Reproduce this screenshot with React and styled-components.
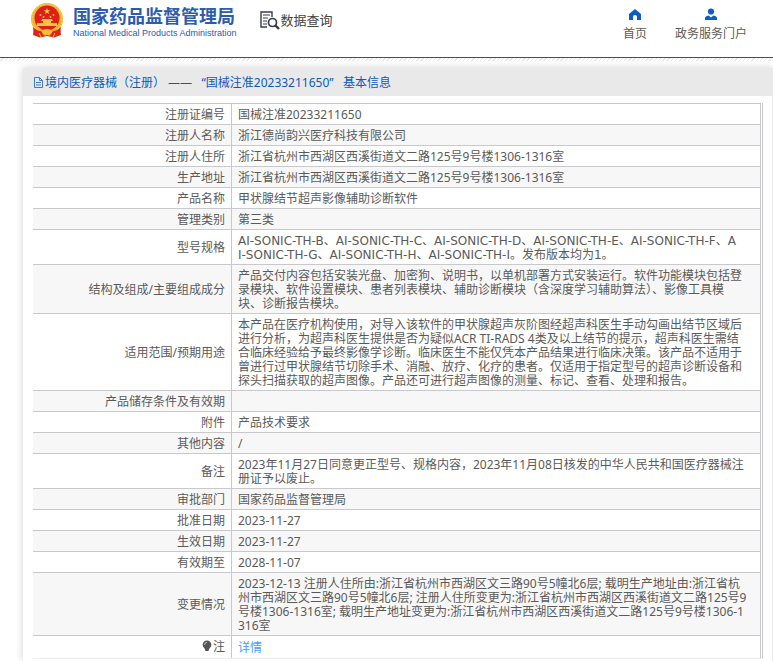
import React from 'react'
import styled, { createGlobalStyle } from 'styled-components'

const GlobalStyle = createGlobalStyle`
  * {
    box-sizing: border-box;
  }
  body {
    margin: 0;
    background: #fff;
    color: #5a5a5a;
    font: 12px/14px 'Noto Sans', 'Noto Sans CJK SC', sans-serif;
  }
  a {
    text-decoration: none;
  }
`

const Page = styled.div`
  display: flex;
  flex-direction: column;
  min-height: 100vh;
  overflow: hidden;
`

const Header = styled.header`
  display: flex;
  align-items: flex-start;
  height: 58px;
  padding: 0 26px 0 30px;
  border-bottom: 1px solid #0d5cab;
`

const Brand = styled.a`
  display: flex;
  gap: 9px;
  padding-top: 2px;
  color: #2b5cad;
`

const BrandText = styled.div`
  display: flex;
  flex-direction: column;
  padding-top: 4px;
  white-space: nowrap;
`

const BrandName = styled.strong`
  font-size: 18px;
  line-height: 20px;
  font-weight: 700;
`

const BrandSub = styled.span`
  font: 9px/14px 'Liberation Sans', sans-serif;
`

const Section = styled.div`
  display: flex;
  align-items: center;
  gap: 1px;
  margin: 8px auto 0 23px;
  color: #444;
  font-size: 13px;
  line-height: 24px;
  white-space: nowrap;
`

const Nav = styled.nav`
  display: flex;
  gap: 28px;
  padding-top: 8px;
`

const NavLink = styled.a`
  display: flex;
  flex-direction: column;
  align-items: center;
  gap: 6px;
  color: #5a5a5a;
  white-space: nowrap;

  svg {
    fill: #0a5fc2;
  }
`

const Dots = styled.div`
  height: 3px;
  background: repeating-linear-gradient(135deg, #fff 0 2px, #e9e9e9 2px 3px);
`

const Panel = styled.main`
  flex: 1;
  margin: 7px 0 0 23px;
  border: 1px solid #e9e9e9;
  border-width: 0 1px 0 0;
  box-shadow: 0 0 8px rgba(0, 0, 0, 0.18);
`

const PanelTitle = styled.h1`
  display: flex;
  align-items: center;
  height: 28px;
  margin: 0;
  padding: 2px 10px 0;
  background: #e9e9e9;
  color: #0a5bbf;
  font-size: 12px;
  font-weight: 400;
  white-space: pre;
`

const PanelBody = styled.div`
  padding: 7px 9px 2px 10px;
`

const Table = styled.table`
  width: 100%;
  border-right: 1px solid #c9c9cd;
  border-bottom: 1px solid #ebebf5;
  border-spacing: 0;
  padding-right: 1px;
`

const Row = styled.tr`
  background: ${props => (props.$shaded ? '#f7f7f7' : '#fff')};
`

const Label = styled.th`
  width: 199px;
  padding: 4px 6px ${props => (props.$tall ? '4px' : '2px')};
  border-top: 1px solid #c9c9cd;
  border-right: 1px solid #c9c9cd;
  font-weight: 400;
  text-align: right;
  vertical-align: middle;

  svg {
    margin-right: 1px;
    vertical-align: -1px;
  }
`

const Value = styled.td`
  height: 21px;
  padding: 4px 6px 2px;
  border-top: 1px solid #c9c9cd;
  border-right: 1px solid #c9c9cd;
  font-family: ${props => props.$codes && "'DejaVu Sans', 'Noto Sans CJK SC', sans-serif"};
  vertical-align: middle;
  white-space: pre-line;
  word-break: break-all;
`

const DetailLink = styled.a`
  color: #409eff;
`

const rows = [
  ['注册证编号', '国械注准20233211650'],
  ['注册人名称', '浙江德尚韵兴医疗科技有限公司'],
  ['注册人住所', '浙江省杭州市西湖区西溪街道文二路125号9号楼1306-1316室'],
  ['生产地址', '浙江省杭州市西湖区西溪街道文二路125号9号楼1306-1316室'],
  ['产品名称', '甲状腺结节超声影像辅助诊断软件'],
  ['管理类别', '第三类'],
  ['型号规格', `AI-SONIC-TH-B、AI-SONIC-TH-C、AI-SONIC-TH-D、AI-SONIC-TH-E、AI-SONIC-TH-F、A
I-SONIC-TH-G、AI-SONIC-TH-H、AI-SONIC-TH-I。发布版本均为1。`],
  ['结构及组成/主要组成成分', `产品交付内容包括安装光盘、加密狗、说明书，以单机部署方式安装运行。软件功能模块包括登
录模块、软件设置模块、患者列表模块、辅助诊断模块（含深度学习辅助算法）、影像工具模
块、诊断报告模块。`],
  ['适用范围/预期用途', `本产品在医疗机构使用，对导入该软件的甲状腺超声灰阶图经超声科医生手动勾画出结节区域后
进行分析，为超声科医生提供是否为疑似ACR TI-RADS 4类及以上结节的提示，超声科医生需结
合临床经验给予最终影像学诊断。临床医生不能仅凭本产品结果进行临床决策。该产品不适用于
曾进行过甲状腺结节切除手术、消融、放疗、化疗的患者。仅适用于指定型号的超声诊断设备和
探头扫描获取的超声图像。产品还可进行超声图像的测量、标记、查看、处理和报告。`],
  ['产品储存条件及有效期', ''],
  ['附件', '产品技术要求'],
  ['其他内容', '/'],
  ['备注', `2023年11月27日同意更正型号、规格内容，2023年11月08日核发的中华人民共和国医疗器械注
册证予以废止。`],
  ['审批部门', '国家药品监督管理局'],
  ['批准日期', '2023-11-27'],
  ['生效日期', '2023-11-27'],
  ['有效期至', '2028-11-07'],
  ['变更情况', `2023-12-13 注册人住所由:浙江省杭州市西湖区文三路90号5幢北6层; 载明生产地址由:浙江省杭
州市西湖区文三路90号5幢北6层; 注册人住所变更为:浙江省杭州市西湖区西溪街道文二路125号9
号楼1306-1316室; 载明生产地址变更为:浙江省杭州市西湖区西溪街道文二路125号9号楼1306-1
316室`]
]

const Emblem = () => (
  <svg width='34' height='38' viewBox='0 0 34 38' aria-hidden='true'>
    <path d='M4 26 L3 33 L10 35.5 L17 34 L24 35.5 L31 33 L30 26Z' fill='#d8281c' />
    <circle cx='17' cy='17' r='16' fill='#efb52c' />
    <circle cx='17' cy='17' r='15' fill='none' stroke='#f9d65c' strokeWidth='1' strokeDasharray='2 1' />
    <circle cx='17' cy='16' r='12.5' fill='#df1f1b' />
    <path d='M17 6 L17.8 8.3 H20.2 L18.3 9.7 L19 12 L17 10.6 L15 12 L15.7 9.7 L13.8 8.3 H16.2Z' fill='#fbd34a' />
    <g fill='#f7c542'>
      <circle cx='10.5' cy='13' r='1' />
      <circle cx='13.5' cy='15' r='1' />
      <circle cx='20.5' cy='15' r='1' />
      <circle cx='23.5' cy='13' r='1' />
      <path d='M12 17 H22 L23 19 H11Z M13 19 H21 V21 H27 V24 H7 V21 H13Z' />
    </g>
    <path d='M3 25 Q9 31 14 28 H20 Q25 31 31 25 L30 32 Q23 34 17 31 Q11 34 4 32Z' fill='#e0241c' />
    <path d='M11 29 Q17 25 23 29 L21 32 H13Z' fill='#f5bf35' />
    <path d='M9 31 L11 35 M25 31 L23 35 M15 32 V34 M19 32 V34' stroke='#f5bf35' />
  </svg>
)

const SearchDocIcon = () => (
  <svg width='20' height='20' viewBox='0 0 20 20' fill='none' stroke='#3a3a4c' aria-hidden='true'>
    <path d='M7 17 H1 V2 H12 V7' strokeWidth='1.4' />
    <path d='M3 5 H10 M3 8 H8 M3 11 H7 M3 14 H7' strokeWidth='1.1' />
    <circle cx='12.5' cy='12.5' r='4' strokeWidth='1.7' />
    <path d='M15.3 15.3 L19 19' strokeWidth='2.4' />
  </svg>
)

const HomeIcon = () => (
  <svg width='14' height='13' viewBox='0 0 14 13' aria-hidden='true'>
    <path d='M7 1 L13 6 V12 H9 V8.5 Q9 7 7 7 Q5 7 5 8.5 V12 H1 V6Z' />
  </svg>
)

const UserIcon = () => (
  <svg width='14' height='13' viewBox='0 0 14 13' aria-hidden='true'>
    <circle cx='7' cy='3.5' r='3.1' />
    <path d='M1 12 V10 Q1 8.2 4.6 7.4 L7 9.4 L9.4 7.4 Q13 8.2 13 10 V12Z' />
  </svg>
)

const FileIcon = () => (
  <svg width='12' height='12' viewBox='0 0 12 12' fill='none' stroke='#3d7ac9' aria-hidden='true'>
    <path d='M1.5 0.5 H6.5 L9.5 3.5 V10.5 H1.5Z M6.5 0.5 V3.5 H9.5 M3 5.5 H8 M3 8 H8' />
  </svg>
)

const BulbIcon = () => (
  <svg width='10' height='12' viewBox='0 0 10 12' aria-hidden='true'>
    <path d='M5 0.5 A4.3 4.3 0 0 1 7.5 8.3 L6.5 11 H3.5 L2.5 8.3 A4.3 4.3 0 0 1 5 0.5Z' fill='#555' />
    <path d='M2.5 5 Q2.5 2.5 5 2.3' fill='none' stroke='#ddd' strokeWidth='0.8' />
  </svg>
)

const App = () => {
  return (
    <Page>
      <GlobalStyle />
      <Header>
        <Brand href='#'>
          <Emblem />
          <BrandText>
            <BrandName>国家药品监督管理局</BrandName>
            <BrandSub>National Medical Products Administration</BrandSub>
          </BrandText>
        </Brand>
        <Section>
          <SearchDocIcon />
          数据查询
        </Section>
        <Nav>
          <NavLink href='#'><HomeIcon />首页</NavLink>
          <NavLink href='#'><UserIcon />政务服务门户</NavLink>
        </Nav>
      </Header>
      <Dots />
      <Panel>
        <PanelTitle>
          <FileIcon />
          境内医疗器械（注册） ——   “国械注准20233211650”   基本信息
        </PanelTitle>
        <PanelBody>
          <Table>
            <tbody>
              {rows.map(([label, value], i) => (
                <Row key={label} $shaded={i % 2 === 1}>
                  <Label scope='row'>{label}</Label>
                  <Value $codes={label === '型号规格'}>{value}</Value>
                </Row>
              ))}
              <Row>
                <Label scope='row' $tall><BulbIcon />注</Label>
                <Value><DetailLink href='#'>详情</DetailLink></Value>
              </Row>
            </tbody>
          </Table>
        </PanelBody>
      </Panel>
    </Page>
  )
}

export default App
